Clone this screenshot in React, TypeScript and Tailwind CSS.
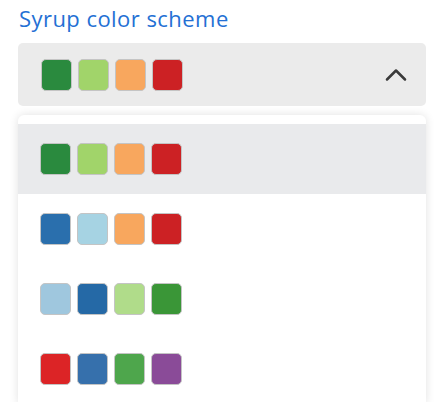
import { ChevronUp } from "lucide-react"

const schemes = [
  ["#2a8a3e", "#a1d46a", "#f8a75e", "#cc2124"],
  ["#2a6fad", "#a6d3e3", "#f8a75e", "#cc2124"],
  ["#9fc7de", "#2569a6", "#b0dc8a", "#3a9637"],
  ["#dc2426", "#3670ac", "#4ea64c", "#8a4b98"],
]

function Swatches({ colors }: { colors: string[] }) {
  return (
    <div className="flex gap-[6px]">
      {colors.map((c, i) => (
        <span
          key={i}
          className="block w-[31px] h-[32px] rounded-[5px] border border-[#c4c4c4]"
          style={{ background: c }}
        />
      ))}
    </div>
  )
}

export default function App() {
  return (
    <div
      className="w-[434px] h-[402px] overflow-hidden bg-white pl-[18px] pr-[8px] pt-[2px]"
      style={{ fontFamily: '"Open Sans", sans-serif' }}
    >
      <label className="block text-[22px] leading-[32px] font-medium tracking-[0.45px] text-[#2470d4] pl-px">
        Syrup color scheme
      </label>

      {/* select trigger */}
      <div className="mt-[9px] h-[63px] flex items-center justify-between rounded-[5px] bg-[#ebebeb] pl-[23px] pr-[12px]">
        <Swatches colors={schemes[0]} />
        <ChevronUp className="w-[36px] h-[36px] text-[#3a3a3a]" strokeWidth={1.7} />
      </div>

      {/* dropdown */}
      <div className="mt-[9px] rounded-t-[6px] bg-white pt-[9px] shadow-[0_0_10px_rgba(0,0,0,0.12)]">
        {schemes.map((s, i) => (
          <div
            key={i}
            className={`h-[70px] flex items-center pl-[22px] ${i === 0 ? "bg-[#e9eaec]" : ""}`}
          >
            <Swatches colors={s} />
          </div>
        ))}
      </div>
    </div>
  )
}
